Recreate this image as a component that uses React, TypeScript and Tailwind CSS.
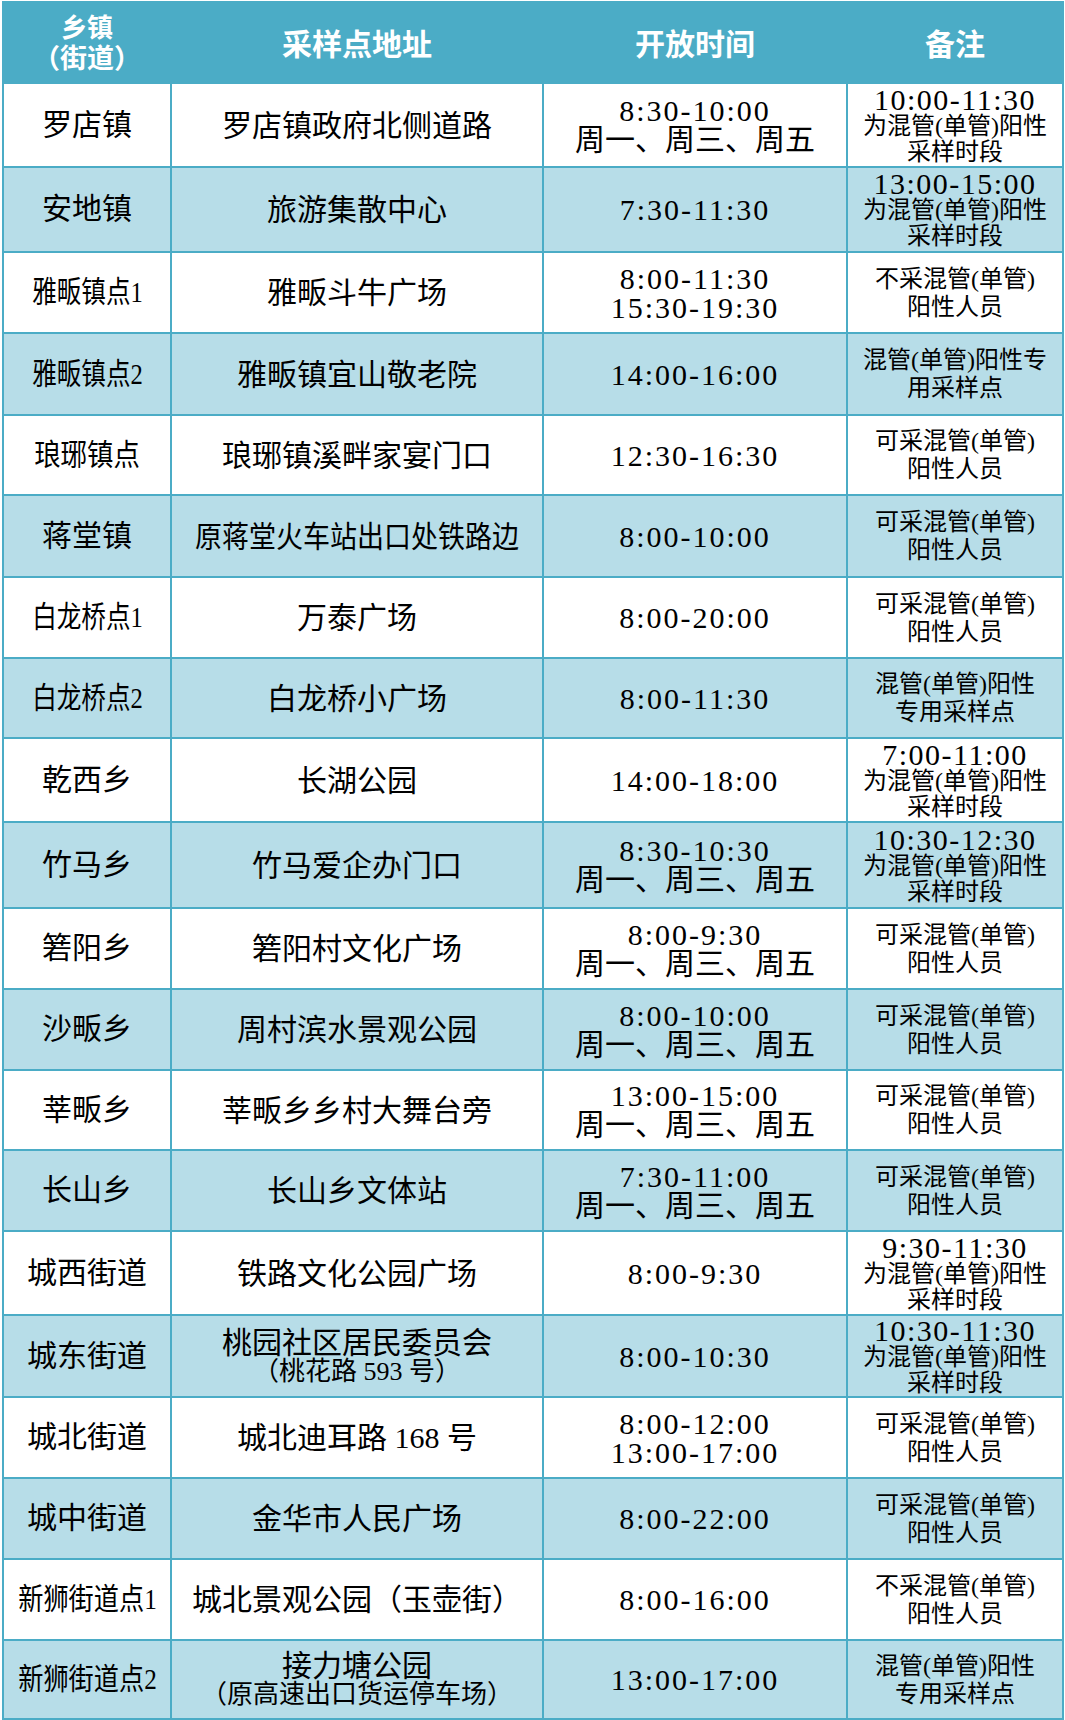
import React from "react";

type Row = {
  town: string;
  squeeze?: string;
  addrSqueeze?: string;
  addr: string[];
  time: string[];
  note: string[];
  h: string;
};

const KE = ["可采混管(单管)", "阳性人员"];
const BU = ["不采混管(单管)", "阳性人员"];
const ZY = ["混管(单管)阳性", "专用采样点"];
const WEEK = "周一、周三、周五";

const ROWS: Row[] = [
  { town: "罗店镇", addr: ["罗店镇政府北侧道路"], time: ["8:30-10:00", WEEK], note: ["10:00-11:30", "为混管(单管)阳性", "采样时段"], h: "h-[84px]" },
  { town: "安地镇", addr: ["旅游集散中心"], time: ["7:30-11:30"], note: ["13:00-15:00", "为混管(单管)阳性", "采样时段"], h: "h-[85px]" },
  { town: "雅畈镇点1", squeeze: "scale-x-[0.82]", addr: ["雅畈斗牛广场"], time: ["8:00-11:30", "15:30-19:30"], note: BU, h: "h-[81px]" },
  { town: "雅畈镇点2", squeeze: "scale-x-[0.82]", addr: ["雅畈镇宜山敬老院"], time: ["14:00-16:00"], note: ["混管(单管)阳性专", "用采样点"], h: "h-[82px]" },
  { town: "琅琊镇点", squeeze: "scale-x-[0.88]", addr: ["琅琊镇溪畔家宴门口"], time: ["12:30-16:30"], note: KE, h: "h-[80px]" },
  { town: "蒋堂镇", addrSqueeze: "scale-x-[0.9]", addr: ["原蒋堂火车站出口处铁路边"], time: ["8:00-10:00"], note: KE, h: "h-[82px]" },
  { town: "白龙桥点1", squeeze: "scale-x-[0.82]", addr: ["万泰广场"], time: ["8:00-20:00"], note: KE, h: "h-[81px]" },
  { town: "白龙桥点2", squeeze: "scale-x-[0.82]", addr: ["白龙桥小广场"], time: ["8:00-11:30"], note: ZY, h: "h-[80px]" },
  { town: "乾西乡", addr: ["长湖公园"], time: ["14:00-18:00"], note: ["7:00-11:00", "为混管(单管)阳性", "采样时段"], h: "h-[84px]" },
  { town: "竹马乡", addr: ["竹马爱企办门口"], time: ["8:30-10:30", WEEK], note: ["10:30-12:30", "为混管(单管)阳性", "采样时段"], h: "h-[86px]" },
  { town: "箬阳乡", addr: ["箬阳村文化广场"], time: ["8:00-9:30", WEEK], note: KE, h: "h-[81px]" },
  { town: "沙畈乡", addr: ["周村滨水景观公园"], time: ["8:00-10:00", WEEK], note: KE, h: "h-[81px]" },
  { town: "莘畈乡", addr: ["莘畈乡乡村大舞台旁"], time: ["13:00-15:00", WEEK], note: KE, h: "h-[80px]" },
  { town: "长山乡", addr: ["长山乡文体站"], time: ["7:30-11:00", WEEK], note: KE, h: "h-[81px]" },
  { town: "城西街道", addr: ["铁路文化公园广场"], time: ["8:00-9:30"], note: ["9:30-11:30", "为混管(单管)阳性", "采样时段"], h: "h-[84px]" },
  { town: "城东街道", addr: ["桃园社区居民委员会", "（桃花路 593 号）"], time: ["8:00-10:30"], note: ["10:30-11:30", "为混管(单管)阳性", "采样时段"], h: "h-[82px]" },
  { town: "城北街道", addr: ["城北迪耳路 168 号"], time: ["8:00-12:00", "13:00-17:00"], note: KE, h: "h-[81px]" },
  { town: "城中街道", addr: ["金华市人民广场"], time: ["8:00-22:00"], note: KE, h: "h-[81px]" },
  { town: "新狮街道点1", squeeze: "scale-x-[0.84]", addr: ["城北景观公园（玉壶街）"], time: ["8:00-16:00"], note: BU, h: "h-[81px]" },
  { town: "新狮街道点2", squeeze: "scale-x-[0.84]", addr: ["接力塘公园", "（原高速出口货运停车场）"], time: ["13:00-17:00"], note: ZY, h: "h-[79px]" },
];

const isTime = (s: string) => /^\d/.test(s);

const cell = "border-2 border-[#4bacc6] text-center align-middle p-0";

export default function App() {
  return (
    <div className="w-[1065px] h-[1720px] bg-white overflow-hidden">
      <table className="table-fixed border-collapse w-[1060px] ml-[2px] mt-[1px] text-black font-['Liberation_Serif','Noto_Sans_CJK_SC',serif]">
        <colgroup>
          <col className="w-[168px]" />
          <col className="w-[372px]" />
          <col className="w-[304px]" />
          <col className="w-[216px]" />
        </colgroup>
        <thead>
          <tr className="h-[81px] bg-[#4bacc6] text-white font-bold font-['Noto_Sans_CJK_SC',sans-serif]">
            <th className={`${cell} pb-[3px]`}>
              <div className="text-[26px] leading-[31px]">乡镇</div>
              <div className="text-[27px] leading-[31px] whitespace-nowrap">（街道）</div>
            </th>
            <th className={`${cell} text-[30px]`}>采样点地址</th>
            <th className={`${cell} text-[30px]`}>开放时间</th>
            <th className={`${cell} text-[30px]`}>备注</th>
          </tr>
        </thead>
        <tbody>
          {ROWS.map((r, i) => (
            <tr key={i} className={`${r.h} ${i % 2 === 1 ? "bg-[#b7dde8]" : "bg-white"}`}>
              <td className={cell}>
                <span className={`inline-block text-[30px] leading-[32px] whitespace-nowrap ${r.squeeze ?? ""}`}>{r.town}</span>
              </td>
              <td className={cell}>
                {r.addr.map((a, j) => (
                  <div
                    key={j}
                    className={`whitespace-nowrap ${j === 0 ? "text-[30px] leading-[31px]" : "text-[26px] leading-[28px]"} ${r.addrSqueeze ?? ""}`}
                  >
                    {a}
                  </div>
                ))}
              </td>
              <td className={cell}>
                {r.time.map((t, j) => (
                  <div key={j} className={isTime(t) ? "text-[30px] leading-[29px] tracking-[2px]" : "text-[30px] leading-[29px]"}>
                    {t}
                  </div>
                ))}
              </td>
              <td className={cell}>
                {r.note.map((n, j) =>
                  isTime(n) ? (
                    <div key={j} className="text-[30px] leading-[27px] tracking-[1.5px]">{n}</div>
                  ) : (
                    <div key={j} className={`text-[24px] whitespace-nowrap ${r.note.length > 2 ? "leading-[26px]" : "leading-[28px]"}`}>
                      {n}
                    </div>
                  )
                )}
              </td>
            </tr>
          ))}
        </tbody>
      </table>
    </div>
  );
}
